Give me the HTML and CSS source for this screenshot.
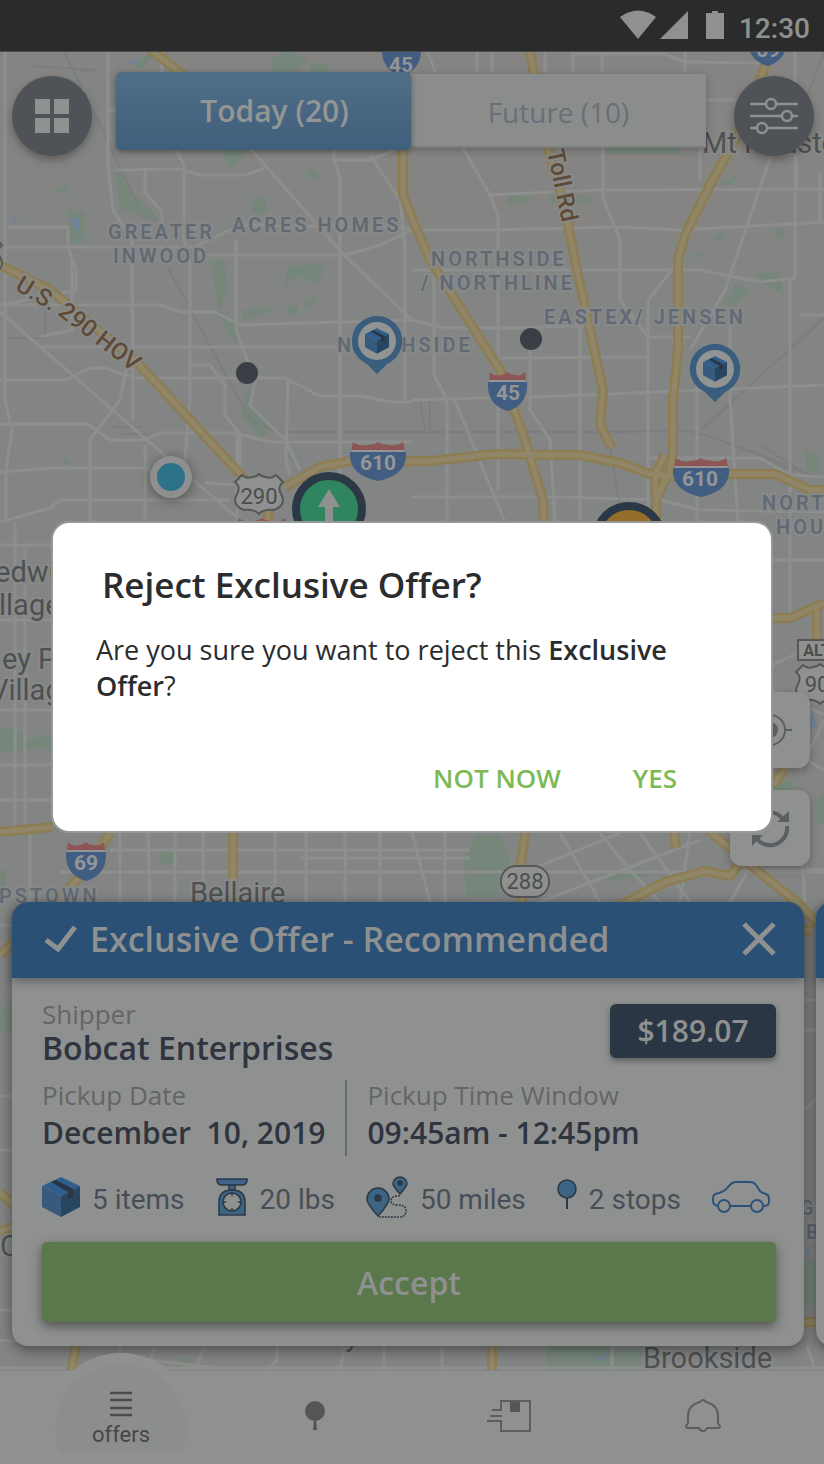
FILE: index.html
```html
<!DOCTYPE html>
<html lang="en">
<head>
    <meta charset="UTF-8">
    <meta name="viewport" content="width=device-width, initial-scale=1.0">
    <title>Offers</title>
    <link rel="stylesheet" href="styles.css">
</head>
<body>

<svg class="symbols" aria-hidden="true">
    <symbol id="box" viewBox="0 0 38 40">
        <path fill="#2f5d8c" d="M19 0 38 9 19 19 0 9z"/>
        <path fill="#385a7c" d="M0 9 19 19V40L0 30z"/>
        <path fill="#284562" d="M38 9 19 19V40L38 30z"/>
        <path fill="#2b3644" d="M9 5 14 3 31 12V20L26 22V15z"/>
    </symbol>
    <symbol id="interstate" viewBox="0 0 40 40" preserveAspectRatio="none">
        <path fill="#8e5556" d="M2 1Q7 6 12 4 17 4 20 1 23 4 28 4 33 6 38 1L39 9H1z"/>
        <path fill="#949695" d="M1 9H39V12H1z"/>
        <path fill="#415d82" d="M0 11H40C41 26 34 36 20 40 6 36-1 26 0 11z"/>
    </symbol>
    <symbol id="us-route" viewBox="0 0 52 42">
        <path fill="#8f9190" stroke="#565857" stroke-width="2" d="M9 2Q13 6 19 4 23 4 26 1 29 4 33 4 39 6 43 2L50 9Q44 14 48 21 54 32 41 37 30 36 26 41 22 36 11 37-2 32 4 21 8 14 2 9z"/>
    </symbol>
    <symbol id="pin" viewBox="0 0 50 58">
        <path fill="#3a5d7d" d="M25 0a25 25 0 0 1 10 48L25 58 15 48A25 25 0 0 1 25 0z"/>
        <circle cx="25" cy="25" r="19" fill="#929493"/>
        <use href="#box" x="13" y="12" width="24" height="26"/>
    </symbol>
</svg>

<header class="status-bar">
    <svg class="status-icons" width="106" height="30" viewBox="0 0 106 30" aria-hidden="true">
        <path d="M0 7Q18-6 36 7L18 29z"/>
        <path d="M68 1V29H40z"/>
        <path d="M86 3H92V1H98V3H104V29H86z"/>
    </svg>
    <time>12:30</time>
</header>

<main>
    <svg class="map" viewBox="0 52 824 1318" preserveAspectRatio="xMidYMin slice" aria-hidden="true">
        <g class="district">
            <path d="M8 52H64V212H8zM110 52H320L390 165H240V160H115zM130 160h30v50h-30zM340 52H640L700 240 412 225 360 160zM640 52H824V225L650 228zM8 228h60v16H8zM280 1340h110v30H280z"/>
        </g>
        <g class="park">
            <path d="M270 60l20-10 18 10-12 14h-24zM310 63h18v10h-18zM140 58l16-6-12 16h-10zM115 165l20 30 16 14 9 14-20-7-20-8zM68 210l17 3 0 29h-15zM220 150h30l-20 18zM253 198l10-2 5 14-10 6-6-4zM306 172l8-3 7 7-7 6zM52 189l15-4v10z"/>
            <path d="M210 260h14l4 30-8 20 14 14 4 18-10-6-10-30-3-20zM288 266l38-2-8 20-20-8-14 10zM242 311l14-5 20 2-24 10-10 3zM288 306h10v8h-10zM302 303l14-8-6 18zM246 395l9-14-4 24 18 22-8 14-20-25zM63 454l10 11-10-1zM285 440l14 28-12-12z"/>
            <path d="M605 148h75v6h-75zM506 196h30l-15 9h-12zM550 195h40v8h-40zM718 182l18-6-2 8-10 2zM710 240l15-10-3 10zM776 229h8v9h-8zM722 304l14-20 16 8-18 14zM755 274l24-2 5 24-15-9zM805 448l14 8 2 18-14-3zM691 252h14l-7 6z"/>
            <path d="M0 730q16-6 28 10l25-8v16l-53 4zM476 835h25l9 25-14 37h-30l-2-40zM160 852h14v12h-14zM0 870h6v25H0zM818 800l6-6v30l-8-3zM773 783l20-3v14h-20zM600 875l40-8 10 8-40 6zM0 1010l12-8v30H0zM180 1358h12v10h-15zM546 1344h65v28h-65zM612 1352l30-6v26h-30zM804 1260h12v45h-12z"/>
        </g>
        <g class="water">
            <path d="M126 62l13-2-4 5zM72 217l8 2-2 14-6-8zM12 220l6-3-4 7zM75 240l8-4-5 7zM596 1358l12-5-5 9zM805 1250l5-5v16zM812 712l4 8v8h-6z"/>
        </g>
        <g class="rail">
            <path d="M64 52L82 88M34 66L98 70 80 72M84 92L145 220M168 268L250 420 275 432H412L610 432 690 431 720 440 824 480M700 431L824 318M608 432L622 522M45 300v38H10M112 427h30M125 434h22M824 52L790 140M420 400l5 30M430 400v32M760 445l40 25M750 450l45 22"/>
        </g>
        <g class="street">
            <path d="M5 52V400L12 430 6 470V522M108 52V165L113 210 132 240 133 420M106 111H116M162 52V72M176 150L184 165V240L190 260V400L184 470M5 247H195L240 225 412 228M115 170L180 169 200 175 245 175 265 168M145 170V192L162 212V235M8 227H68V246L76 270V290L0 305M250 148L344 255 412 320M334 150V160L340 178V470M0 305H160L182 312H215L240 325 412 320M72 260V330L40 337M0 312L170 460 240 520M0 380H65L90 368H105L135 378H285L320 396H360L390 402H412"/>
            <path d="M0 424H88L110 440H145L160 433H235L270 442H412M0 472L50 468H150M0 522L50 508 60 500H230M90 522V440L120 400 130 350M145 520V445M236 240V330L255 380 250 405 285 440 300 470M237 520V430L225 415V385L210 365H190M340 178V522M288 380L286 460 290 475M400 148L370 160H335M370 155L400 200 405 250V400M195 255H345L380 245 412 230M40 347H400M240 430V500M205 483L240 485"/>
            <path d="M412 230H490L620 227 680 230 824 222M463 148L490 195 498 215V490M488 195L600 190 824 189M603 148V198L620 240V300M412 270H700L760 282 795 278V52L797 190M620 240V300L648 337H690M648 522V300L680 260M770 158L725 290 690 350M412 320L445 328H520L600 325M434 250V375L447 400V522M500 358L646 357M530 350V410L550 440 555 522M412 400L560 396 824 385M697 385V522M730 320V400L738 522M790 280V520M412 497L560 497 660 500 700 510 824 512M453 396L505 522M580 280V520M820 225V172M700 182V100H735M428 52L435 72M477 52V72M492 52V72M545 52V72M573 52V72M602 52V72M572 54H665L685 62 760 63M685 52V72M646 458H760L790 475 824 477M800 315H824"/>
            <path d="M0 545H51M15 522V830M0 620H51M0 710H51M25 550V830M0 765H51M0 800H51M773 560H824M790 522V620M773 665L824 640M773 740L824 770M773 690L824 715M800 770L824 720M30 833V902M120 833V902M148 833L150 902M175 833V902M203 833V902M275 833V902M306 833V902M345 833V902M380 833V902M412 833L430 902M445 833V902M110 850H470M60 872H824M300 858H470M560 833L600 902M600 833L630 870 660 902M640 833L690 902M690 833L680 902M530 870L620 833M540 902L700 840M730 902L770 833M800 833L805 902M740 870H824M0 925H12M0 1096H12M0 1150H12M0 1310H12M0 1340L70 1346M0 1368H824M120 1346V1360M155 1346L150 1360 218 1368M205 1346L195 1370M277 1346V1360L268 1370M345 1346L340 1370M384 1346V1370M442 1346V1370M612 1346V1370M807 1346L815 1370M804 1000H816M804 1030H816M804 1110L816 1100"/>
        </g>
        <g class="highway" id="highways">
            <path id="hw" d="M148 48L190 80M403 140V195L412 218 430 260 500 370 525 440 531 460 543 500 544 530M530 52L548 148 565 210 577 270 603 390 600 425 612 448M767 60L757 90 735 140 710 185 685 235 678 260V350L673 400V450L670 470 656 500V530M0 265L50 290 135 360 250 485M285 487L320 467 350 461 430 461 495 454 580 455 620 463 650 474 690 478 700 474H775L810 490H824M665 455L655 475 656 500M772 618H790L824 603M817 610V640M0 832L53 827M110 833L85 870 55 905 0 955M233 833V905M525 833L520 870 522 905M674 833L676 848M702 825L748 863 800 905 824 930M742 860L730 876 705 871 665 882 615 908M0 1192L16 1208M0 1232L14 1226M77 1340L71 1372M492 1340V1372M804 1322H820M268 500V525M812 930H804M773 785L785 768"/>
            <use href="#hw"/>
        </g>

        <g class="area-label">
            <text x="108" y="239">GREATER</text>
            <text x="113" y="263">INWOOD</text>
            <text x="232" y="232">ACRES HOMES</text>
            <text x="431" y="266">NORTHSIDE</text>
            <text x="421" y="290">/ NORTHLINE</text>
            <text x="544" y="324">EASTEX/ JENSEN</text>
            <text x="337" y="352">NORTHSIDE</text>
            <text x="762" y="510">NORTH</text>
            <text x="776" y="534">HOUSTON</text>
            <text x="-1" y="903">PSTOWN</text>
            <text x="800" y="1215">GE</text>
            <text x="806" y="1239">BE</text>
        </g>
        <g class="city-label">
            <text x="702" y="153">Mt Houston</text>
            <text x="-5" y="582">edwi</text>
            <text x="-1" y="615">llage</text>
            <text x="2" y="669">ey P</text>
            <text x="-10" y="700">Villag</text>
            <text x="190" y="903">Bellaire</text>
            <text x="643" y="1368">Brookside</text>
            <text x="0" y="1256">C</text>
            <text x="280" y="1346">Sunny</text>
        </g>
        <g class="road-label">
            <path id="us290" fill="none" d="M14 289L62 318 146 382"/>
            <path id="toll" fill="none" d="M547 151L564 232"/>
            <text><textPath href="#us290">U.S. 290 HOV</textPath></text>
            <text><textPath href="#toll">Toll Rd</textPath></text>
        </g>

        <g class="shield-label">
            <use href="#interstate" x="382" y="36" width="39" height="40"/>
            <text x="401" y="72">45</text>
            <use href="#interstate" x="748" y="26" width="39" height="40"/>
            <text x="768" y="57">69</text>
            <use href="#interstate" x="488" y="371" width="39" height="40"/>
            <text x="508" y="400">45</text>
            <use href="#interstate" x="350" y="441" width="56" height="40"/>
            <text x="378" y="470">610</text>
            <use href="#interstate" x="673" y="457" width="56" height="40"/>
            <text x="700" y="486">610</text>
            <use href="#interstate" x="236" y="517" width="52" height="40"/>
            <use href="#interstate" x="66" y="841" width="40" height="40"/>
            <text x="86" y="870">69</text>
        </g>
        <g class="route-label">
            <use href="#us-route" x="233" y="473" width="52" height="42"/>
            <text x="259" y="504">290</text>
            <use href="#us-route" x="-48" y="236" width="52" height="42"/>
            <use href="#us-route" x="794" y="663" width="52" height="42"/>
            <text x="817" y="692">90</text>
            <rect x="798" y="640" width="46" height="20"/>
            <text class="alt" x="817" y="656">ALT</text>
            <rect x="501" y="866" width="48" height="31" rx="15"/>
            <text x="525" y="889">288</text>
        </g>

        <circle cx="247" cy="373" r="11" fill="#3c3e45"/>
        <circle cx="531" cy="339" r="11" fill="#3c3e45"/>
        <use href="#pin" x="352" y="316" width="50" height="58"/>
        <use href="#pin" x="690" y="344" width="50" height="58"/>
        <circle class="here" cx="171" cy="477" r="21" fill="#8f8f8f"/>
        <circle cx="171" cy="477" r="14" fill="#2d7288"/>
        <circle cx="329" cy="509" r="33" fill="#2f855e" stroke="#2b3846" stroke-width="8"/>
        <path fill="#8f9190" d="M329 489L340 507H333V530H325V507H318z"/>
        <circle cx="629" cy="539" r="33" fill="#946d28" stroke="#2b3846" stroke-width="8"/>
    </svg>

    <div class="top-bar">
        <button class="round-button" aria-label="Dashboard">
            <svg width="34" height="34" viewBox="0 0 34 34" fill="#8f9190"><path d="M0 0H15V15H0zM19 0H34V15H19zM0 19H15V34H0zM19 19H34V34H19z"/></svg>
        </button>
        <div class="tabs" role="tablist">
            <button class="tab active" role="tab" aria-selected="true">Today (20)</button>
            <button class="tab" role="tab" aria-selected="false">Future (10)</button>
        </div>
        <button class="round-button" aria-label="Filters">
            <svg width="48" height="38" viewBox="0 0 48 38" fill="#4f5357" stroke="#8f9190" stroke-width="2.5" stroke-linecap="round"><path d="M1 7H47M1 19H47M1 31H47"/><circle cx="21" cy="7" r="5"/><circle cx="37" cy="19" r="5"/><circle cx="12" cy="31" r="5"/></svg>
        </button>
    </div>

    <div class="map-controls">
        <button class="map-button" aria-label="My location">
            <svg width="46" height="46" viewBox="0 0 46 46" fill="none" stroke="#5b5e62" stroke-width="2"><circle cx="23" cy="23" r="15"/><circle cx="23" cy="23" r="8" fill="#5b5e62" stroke="none"/><path d="M23 1V8M23 38V45M1 23H8M38 23H45"/></svg>
        </button>
        <button class="map-button" aria-label="Refresh">
            <svg width="42" height="42" viewBox="0 0 42 42" fill="none" stroke="#5b5e62" stroke-width="4"><path d="M4 18A17 17 0 0 1 34 12M38 19A17 17 0 0 1 8 32"/><path fill="#5b5e62" stroke="none" d="M40 4V15H28zM3 28H14L3 39z"/></svg>
        </button>
    </div>

    <div class="offers">
        <article class="offer">
            <header class="offer-header">
                <svg width="34" height="28" viewBox="0 0 34 28" fill="none" stroke="#8f9190" stroke-width="5"><path d="M2 15L14 24 31 2"/></svg>
                <h2>Exclusive Offer - Recommended</h2>
                <button class="close" aria-label="Close">
                    <svg width="34" height="34" viewBox="0 0 34 34" stroke="#8f9190" stroke-width="5"><path d="M2 2L32 32M32 2L2 32"/></svg>
                </button>
            </header>
            <div class="offer-body">
                <div class="shipper-row">
                    <div class="shipper">
                        <span class="label">Shipper</span>
                        <strong>Bobcat Enterprises</strong>
                    </div>
                    <span class="price">$189.07</span>
                </div>
                <div class="pickup-row">
                    <div class="pickup">
                        <span class="label">Pickup Date</span>
                        <strong>December&nbsp; 10, 2019</strong>
                    </div>
                    <div class="pickup">
                        <span class="label">Pickup Time Window</span>
                        <strong>09:45am - 12:45pm</strong>
                    </div>
                </div>
                <ul class="stats">
                    <li><svg width="38" height="40"><use href="#box"/></svg>5 items</li>
                    <li>
                        <svg width="32" height="38" viewBox="0 0 32 38" fill="#3d6482" stroke="#2b3846" stroke-width="1.5"><path fill="#42648a" d="M1 1H31V3Q30 7 26 7H6Q2 7 1 3z"/><path d="M13 7H19V12H13zM3 37V24Q3 12 16 12T29 24V37z"/><circle cx="16" cy="24" r="9" fill="#8f9190"/><path d="M16 15v3M16 30v3M7 24h3M22 24h3"/></svg>
                        20 lbs
                    </li>
                    <li>
                        <svg width="42" height="42" viewBox="0 0 42 42" fill="#3d6482" stroke="#2b3846" stroke-width="1.5"><path d="M12 40Q1 28 1 23A11 11 0 0 1 23 23Q23 28 12 40z"/><path d="M34 18Q27 10 27 8A7 7 0 0 1 41 8Q41 10 34 18z"/><path fill="none" stroke-dasharray="2 1" d="M34 20H30Q25 21 25 25 25 29 32 29 40 29 40 35 40 41 33 41H12"/><circle cx="12" cy="22" r="3" fill="#2b3846"/><circle cx="34" cy="7" r="2" fill="#2b3846"/></svg>
                        50 miles
                    </li>
                    <li>
                        <svg width="20" height="38" viewBox="0 0 20 38" fill="#3d6482" stroke="#2b3846"><path stroke-width="2" d="M10 20V31"/><circle cx="10" cy="11" r="9" stroke-width="1.5"/></svg>
                        2 stops
                    </li>
                    <li>
                        <svg width="58" height="32" viewBox="0 0 58 32" fill="none" stroke="#2d527a" stroke-width="2" role="img" aria-label="Car"><path d="M6 25Q1 24 1 20V17Q1 13 7 12 13 10 15 7L18 4Q20 1 24 1H38Q42 1 44 4L48 10Q50 12 54 13 57 14 57 18V21Q57 25 51 25M18 25H39"/><circle cx="12" cy="25" r="6"/><circle cx="45" cy="25" r="6"/></svg>
                    </li>
                </ul>
                <button class="accept">Accept</button>
            </div>
        </article>
        <article class="offer" aria-hidden="true">
            <header class="offer-header"></header>
        </article>
    </div>
</main>

<nav>
    <a href="#" class="current">
        <svg width="22" height="26" viewBox="0 0 22 26" stroke="#4a4c50" stroke-width="2.5"><path d="M0 2H22M0 9H22M0 17H22M0 24H22"/></svg>
        offers
    </a>
    <a href="#" aria-label="Stops">
        <svg width="20" height="30" viewBox="0 0 20 30" fill="#545655"><circle cx="10" cy="10" r="10"/><path d="M9 18H11L12 29H8z"/></svg>
    </a>
    <a href="#" aria-label="Deliveries">
        <svg width="44" height="32" viewBox="0 0 44 32" fill="none" stroke="#5c5e5d" stroke-width="2"><path d="M14 10V1H43V31H14V21M5 10H15M3 16H15M0 21H15"/><path fill="#545655" stroke="none" d="M23 2H33V12H23z"/></svg>
    </a>
    <a href="#" aria-label="Notifications">
        <svg width="36" height="34" viewBox="0 0 36 34" fill="none" stroke="#5c5e5d" stroke-width="2"><path d="M15 3Q18-1 21 3 33 6 33 17V24L35 27Q35 29 33 29H22Q21 32 18 32T14 29H3Q1 29 1 27L3 24V17Q3 6 15 3z"/></svg>
    </a>
</nav>

<div class="overlay">
    <section class="dialog" role="dialog" aria-modal="true" aria-labelledby="dialog-title">
        <h1 id="dialog-title">Reject Exclusive Offer?</h1>
        <p>Are you sure you want to reject this <b>Exclusive Offer</b>?</p>
        <div class="actions">
            <button>NOT NOW</button>
            <button>YES</button>
        </div>
    </section>
</div>

</body>
</html>
```
FILE: styles.css
```css
* {
    padding: 0;
    margin: 0;
    box-sizing: border-box;
}
body {
    min-height: 100vh;
    display: flex;
    flex-direction: column;
    overflow-x: hidden;
    background-color: #8f9190;
    font-family: "Open Sans", "Noto Sans", sans-serif;
}
button {
    border: none;
    background: none;
    font-family: inherit;
    cursor: pointer;
}
svg {
    display: block;
    flex-shrink: 0;
}
.symbols {
    position: absolute;
    width: 0;
    height: 0;
}

/* status bar */
.status-bar {
    height: 52px;
    padding: 6px 14px 0 0;
    display: flex;
    align-items: center;
    justify-content: flex-end;
    gap: 13px;
    background-color: #2a2c2b;
    border-bottom: 1px solid #494b4a;
    color: #8f9190;
    font: 500 28px/32px Roboto, sans-serif;
}
.status-icons {
    fill: #8f9190;
    margin-bottom: 8px;
}

/* map */
main {
    flex: 1;
    display: flex;
    flex-direction: column;
    position: relative;
    overflow: hidden;
    background-color: #838584;
}
.map {
    position: absolute;
    top: 0;
    left: 0;
    width: 100%;
    height: 100%;
    font-family: Roboto, sans-serif;
}
.district {
    fill: #868482;
}
.park {
    fill: #77867b;
}
.water {
    fill: #6f8296;
}
.rail {
    fill: none;
    stroke: #7b7d80;
    stroke-width: 2;
}
.street {
    fill: none;
    stroke: #8d8f8e;
    stroke-width: 3;
    stroke-linejoin: round;
}
.highway {
    fill: none;
    stroke: #8c7d52;
    stroke-width: 10;
    stroke-linejoin: round;
}
.highway use {
    stroke: #918768;
    stroke-width: 5;
}
.highway path {
    stroke: inherit;
    stroke-width: inherit;
}
.area-label {
    fill: #626975;
    font-size: 20px;
    font-weight: 600;
    letter-spacing: 3px;
}
.city-label {
    fill: #4e5052;
    font-size: 29px;
}
.road-label {
    fill: #604a35;
    font-size: 24px;
    font-weight: 500;
}
.area-label text,
.city-label text,
.road-label text {
    stroke: #878988;
    stroke-width: 4;
    paint-order: stroke;
}
.shield-label text {
    fill: #949695;
    font-size: 21px;
    font-weight: 700;
    text-anchor: middle;
}
.route-label text {
    fill: #4b4d4c;
    font-size: 22px;
    text-anchor: middle;
}
.route-label .alt {
    font-size: 16px;
    font-weight: 700;
}
.route-label rect {
    fill: #8f9190;
    stroke: #565857;
    stroke-width: 2;
}
.here {
    filter: drop-shadow(0 2px 6px rgba(0, 0, 0, 0.4));
}

/* controls over the map */
.top-bar {
    position: relative;
    display: flex;
    align-items: flex-start;
    padding: 20px 10px 0 12px;
}
.round-button {
    flex: 0 0 80px;
    height: 80px;
    margin-top: 4px;
    display: flex;
    align-items: center;
    justify-content: center;
    border-radius: 50%;
    background-color: #4f5357;
    box-shadow: 0 4px 8px rgba(0, 0, 0, 0.3);
}
.tabs {
    flex: 1;
    display: flex;
    align-items: center;
    margin: 0 28px 0 24px;
}
.tab {
    width: 50%;
    height: 74px;
    padding-top: 4px;
    background-color: #8b8d8c;
    border-bottom: 2px solid #7c7e7d;
    box-shadow: 0 2px 8px rgba(0, 0, 0, 0.25);
    color: #6a6f78;
    font-size: 28px;
}
.tab.active {
    position: relative;
    height: 78px;
    padding: 0 0 2px 22px;
    border: none;
    border-radius: 5px;
    background: linear-gradient(#516e87, #405f7c);
    box-shadow: 0 2px 6px rgba(0, 0, 0, 0.4);
    color: #949695;
    font-size: 30px;
    font-weight: 600;
}
.map-controls {
    position: relative;
    align-self: flex-end;
    margin: auto 14px 36px 0;
    display: flex;
    flex-direction: column;
    gap: 22px;
}
.map-button {
    width: 80px;
    height: 76px;
    display: flex;
    align-items: center;
    justify-content: center;
    border-radius: 12px;
    background-color: #8f9190;
    box-shadow: 0 3px 8px rgba(0, 0, 0, 0.3);
}

/* offer cards */
.offers {
    position: relative;
    display: flex;
    gap: 12px;
    padding-left: 12px;
    margin-bottom: 24px;
}
.offer {
    flex: 0 0 calc(100% - 20px);
    border-radius: 16px;
    background-color: #8f9190;
    box-shadow: 0 4px 14px rgba(0, 0, 0, 0.45);
}
.offer-header {
    height: 76px;
    padding: 0 28px 2px 32px;
    display: flex;
    align-items: center;
    gap: 12px;
    border-radius: 16px 16px 0 0;
    background-color: #2a5075;
    box-shadow: 0 4px 10px rgba(0, 0, 0, 0.3);
    color: #8f9190;
}
.offer-header h2 {
    font-size: 34px;
    font-weight: 600;
}
.close {
    margin-left: auto;
}
.offer-body {
    padding: 20px 28px 24px 30px;
}
.label {
    display: block;
    color: #646665;
    font-size: 26px;
    line-height: 32px;
}
.offer-body strong {
    display: block;
    color: #2f343f;
    font-weight: 600;
}
.shipper-row {
    display: flex;
    justify-content: space-between;
    margin-bottom: 14px;
}
.shipper strong {
    font-size: 32px;
    line-height: 36px;
}
.price {
    width: 166px;
    height: 54px;
    margin-top: 6px;
    border-radius: 6px;
    background-color: #2b3644;
    box-shadow: 0 3px 6px rgba(0, 0, 0, 0.35);
    color: #8f9190;
    font-size: 30px;
    font-weight: 600;
    line-height: 54px;
    text-align: center;
}
.pickup-row {
    display: flex;
    gap: 20px;
}
.pickup .label {
    line-height: 30px;
}
.pickup + .pickup {
    padding-left: 20px;
    border-left: 2px solid #676970;
}
.pickup strong {
    font-size: 30px;
    line-height: 46px;
}
.stats {
    height: 52px;
    padding-top: 4px;
    margin: 16px 6px 18px 0;
    display: flex;
    align-items: center;
    justify-content: space-between;
    list-style: none;
    color: #484e57;
    font: 28px/36px Roboto, sans-serif;
}
.stats li {
    display: flex;
    align-items: center;
    gap: 12px;
}
.stats svg {
    margin-bottom: 6px;
}
.accept {
    display: block;
    width: 100%;
    height: 80px;
    border-radius: 5px;
    background-color: #5b774c;
    box-shadow: 0 4px 12px rgba(0, 0, 0, 0.45);
    color: #8f9190;
    font-size: 32px;
    font-weight: 600;
}

/* bottom navigation */
nav {
    position: relative;
    height: 94px;
    padding: 0 24px 4px;
    display: flex;
    background-color: #8f9190;
    border-top: 1px solid #858786;
}
nav a {
    flex: 1;
    display: flex;
    flex-direction: column;
    align-items: center;
    justify-content: center;
    color: #454746;
    font: 22px/28px Roboto, sans-serif;
    text-decoration: none;
}
nav .current {
    position: relative;
    z-index: 0;
    gap: 4px;
    padding-top: 8px;
}
nav .current::before {
    content: "";
    position: absolute;
    z-index: -1;
    top: -18px;
    left: 50%;
    width: 150px;
    height: 100px;
    border-radius: 75px 75px 0 0;
    background: radial-gradient(circle at 75px 76px, #8c8e8d 65px, #8f9190 66px);
    transform: translateX(-50%);
}

/* dialog */
.overlay {
    position: absolute;
    top: 0;
    left: 0;
    width: 100%;
    height: 100%;
    padding: 0 51px 110px;
    display: flex;
    align-items: center;
    justify-content: center;
}
.dialog {
    width: 100%;
    padding: 39px 43px 25px;
    border: 2px solid #969897;
    border-radius: 18px;
    background-color: #ffffff;
    color: #2b2c2e;
}
.dialog h1 {
    padding-left: 6px;
    margin-bottom: 24px;
    font-size: 35px;
    font-weight: 600;
    line-height: 46px;
}
.dialog p {
    margin-bottom: 46px;
    font-size: 27px;
    line-height: 36px;
}
.dialog b {
    font-weight: 600;
}
.actions {
    display: flex;
    justify-content: flex-end;
    gap: 48px;
    padding-right: 39px;
}
.actions button {
    padding: 0 12px;
    color: #7dba55;
    font-size: 26px;
    font-weight: 600;
    line-height: 56px;
}
```
